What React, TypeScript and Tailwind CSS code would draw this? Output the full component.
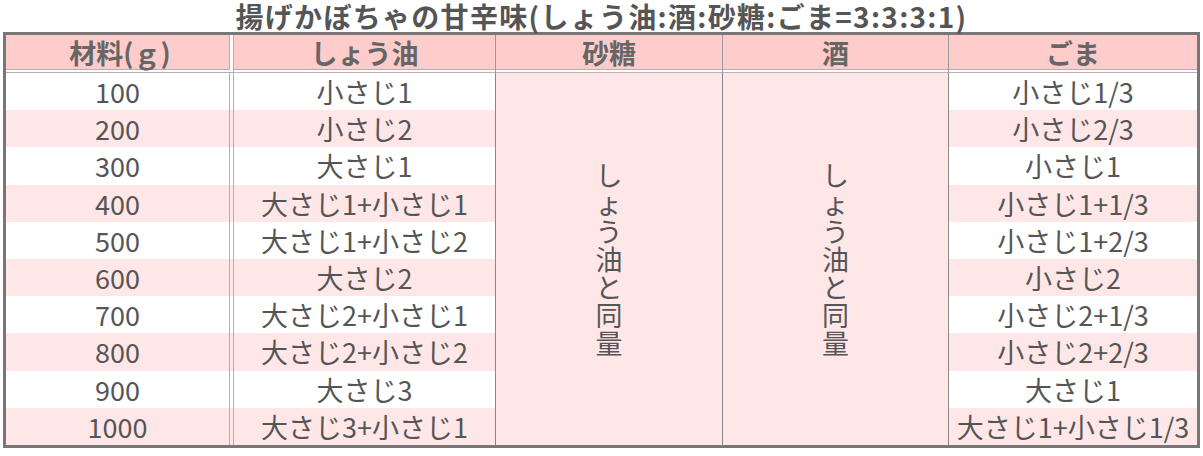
import React from "react";

const rows: [string, string, string][] = [
  ["100", "小さじ1", "小さじ1/3"],
  ["200", "小さじ2", "小さじ2/3"],
  ["300", "大さじ1", "小さじ1"],
  ["400", "大さじ1+小さじ1", "小さじ1+1/3"],
  ["500", "大さじ1+小さじ2", "小さじ1+2/3"],
  ["600", "大さじ2", "小さじ2"],
  ["700", "大さじ2+小さじ1", "小さじ2+1/3"],
  ["800", "大さじ2+小さじ2", "小さじ2+2/3"],
  ["900", "大さじ3", "大さじ1"],
  ["1000", "大さじ3+小さじ1", "大さじ1+小さじ1/3"],
];

const vertical = ["し", "ょ", "う", "油", "と", "同", "量"];

function Merged() {
  return (
    <div className="row-span-10 bg-[#ffe7e7] border-r border-[#888] flex flex-col items-center justify-center">
      {vertical.map((c, i) => (
        <div key={i} className="leading-[28px] h-[28px]">
          {c}
        </div>
      ))}
    </div>
  );
}

const head =
  "bg-[#ffcccc] font-bold text-[#666] flex items-center justify-center pb-[4px]";
const headBottom =
  "shadow-[inset_0_-1px_0_0_#c4b0b0,inset_0_-3px_0_0_#fff,inset_0_-4px_0_0_#b0b0b0]";

export default function App() {
  return (
    <div className="w-[1203px] h-[456px] bg-white text-[#555] font-['Noto_Sans_CJK_JP',sans-serif]">
      <h1 className="h-[32px] text-center text-[28px] font-bold leading-[32px] tracking-[1.3px] text-[#555]">
        揚げかぼちゃの甘辛味(しょう油:酒:砂糖:ごま=3:3:3:1)
      </h1>
      <div className="mx-[3px] h-[416px] border-[3px] border-[#777] grid grid-cols-[228px_262px_227px_226px_1fr] grid-rows-[38px_repeat(10,minmax(0,1fr))] text-[27px] leading-none">
        <div className={`${head} shadow-[inset_-1px_-1px_0_0_#b0b0b0,inset_-4px_-3px_0_0_#fff,inset_-5px_-4px_0_0_#b0b0b0]`}>
          材料(ｇ)
        </div>
        <div className={`${head} ${headBottom} border-r border-[#999]`}>しょう油</div>
        <div className={`${head} ${headBottom} border-r border-[#999]`}>砂糖</div>
        <div className={`${head} ${headBottom} border-r border-[#999]`}>酒</div>
        <div className={`${head} ${headBottom}`}>ごま</div>

        {rows.map((r, i) => {
          const pink = i % 2 === 1;
          const bg = pink ? "bg-[#ffe7e7]" : "bg-white";
          const dbl = pink
            ? "shadow-[inset_-1px_0_0_0_#b0b0b0,inset_-4px_0_0_0_#ffe7e7,inset_-5px_0_0_0_#b0b0b0]"
            : "shadow-[inset_-1px_0_0_0_#b0b0b0,inset_-4px_0_0_0_#fff,inset_-5px_0_0_0_#b0b0b0]";
          return (
            <React.Fragment key={i}>
              <div className={`col-start-1 ${bg} ${dbl} flex items-center justify-center pr-[5px]`}>
                {r[0]}
              </div>
              <div className={`col-start-2 ${bg} border-r border-[#888] flex items-center justify-center`}>
                {r[1]}
              </div>
              {i === 0 && (
                <>
                  <Merged />
                  <Merged />
                </>
              )}
              <div className={`col-start-5 ${bg} flex items-center justify-center`}>
                {r[2]}
              </div>
            </React.Fragment>
          );
        })}
      </div>
    </div>
  );
}
